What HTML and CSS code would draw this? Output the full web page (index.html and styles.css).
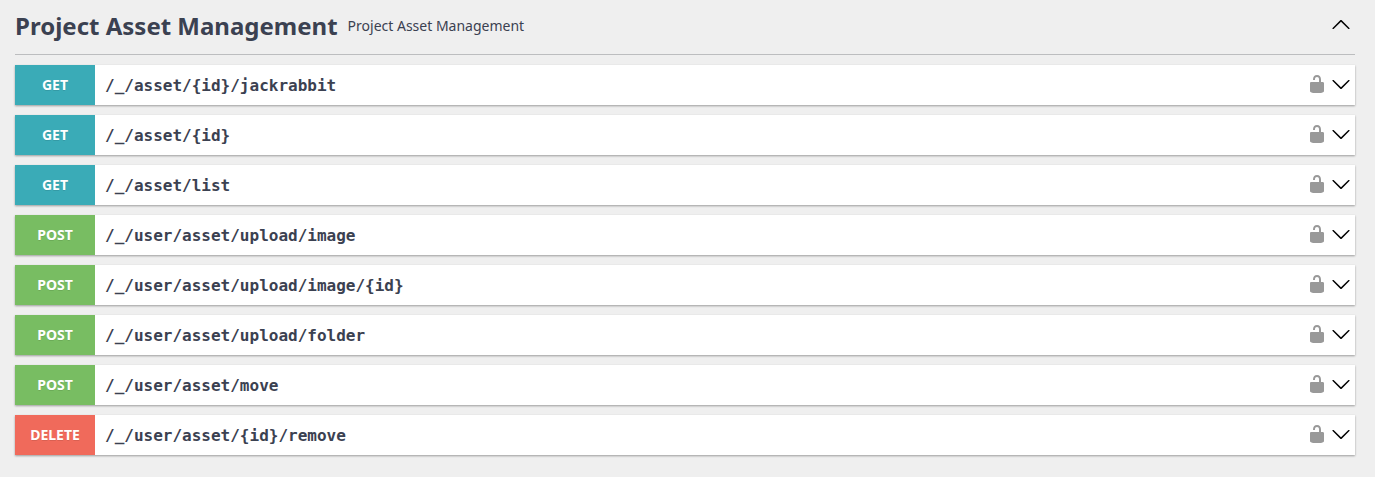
FILE: index.html
```html
<!DOCTYPE html>
<html lang="en">
<head>
<meta charset="utf-8">
<title>Project Asset Management</title>
<link rel="stylesheet" href="styles.css">
</head>
<body>
<svg class="sprite" aria-hidden="true">
  <symbol id="lock" viewBox="0 0 20 20"><path d="M15.8 8H14V5.6C14 2.703 12.665 1 10 1 7.334 1 6 2.703 6 5.6V6h2v-.801C8 3.754 8.797 3 10 3c1.203 0 2 .754 2 2.199V8H4c-.553 0-1 .646-1 1.199V17c0 .549.428 1.139.951 1.307l1.197.387C5.672 18.861 6.55 19 7.1 19h5.8c.549 0 1.428-.139 1.951-.307l1.196-.387c.524-.167.953-.757.953-1.306V9.199C17 8.646 16.352 8 15.8 8z"/></symbol>
  <symbol id="arrow" viewBox="0 0 20 20"><path d="M17.418 6.109c.272-.268.709-.268.979 0s.271.701 0 .969l-7.908 7.83c-.27.268-.707.268-.979 0l-7.908-7.83c-.27-.268-.27-.701 0-.969.271-.268.709-.268.979 0L10 13.25l7.418-7.141z"/></symbol>
</svg>
<section class="tag-section">
  <header class="tag-header">
    <h3 class="tag-title">Project Asset Management</h3>
    <small class="tag-desc">Project Asset Management</small>
    <svg class="arrow up" width="20" height="20"><use href="#arrow"/></svg>
  </header>
  <div class="ops">
    <div class="op"><span class="method get">GET</span><span class="path">/_/asset/{id}/jackrabbit</span><svg class="lock" width="20" height="20"><use href="#lock"/></svg><svg class="arrow" width="20" height="20"><use href="#arrow"/></svg></div>
    <div class="op"><span class="method get">GET</span><span class="path">/_/asset/{id}</span><svg class="lock" width="20" height="20"><use href="#lock"/></svg><svg class="arrow" width="20" height="20"><use href="#arrow"/></svg></div>
    <div class="op"><span class="method get">GET</span><span class="path">/_/asset/list</span><svg class="lock" width="20" height="20"><use href="#lock"/></svg><svg class="arrow" width="20" height="20"><use href="#arrow"/></svg></div>
    <div class="op"><span class="method post">POST</span><span class="path">/_/user/asset/upload/image</span><svg class="lock" width="20" height="20"><use href="#lock"/></svg><svg class="arrow" width="20" height="20"><use href="#arrow"/></svg></div>
    <div class="op"><span class="method post">POST</span><span class="path">/_/user/asset/upload/image/{id}</span><svg class="lock" width="20" height="20"><use href="#lock"/></svg><svg class="arrow" width="20" height="20"><use href="#arrow"/></svg></div>
    <div class="op"><span class="method post">POST</span><span class="path">/_/user/asset/upload/folder</span><svg class="lock" width="20" height="20"><use href="#lock"/></svg><svg class="arrow" width="20" height="20"><use href="#arrow"/></svg></div>
    <div class="op"><span class="method post">POST</span><span class="path">/_/user/asset/move</span><svg class="lock" width="20" height="20"><use href="#lock"/></svg><svg class="arrow" width="20" height="20"><use href="#arrow"/></svg></div>
    <div class="op"><span class="method delete">DELETE</span><span class="path">/_/user/asset/{id}/remove</span><svg class="lock" width="20" height="20"><use href="#lock"/></svg><svg class="arrow" width="20" height="20"><use href="#arrow"/></svg></div>
  </div>
</section>
</body>
</html>
```

FILE: styles.css
```css
* { box-sizing: border-box; }
html, body { height: 100%; }
body {
  margin: 0;
  background: #efefef;
  color: #3b4151;
  font-family: "Noto Sans", sans-serif;
  overflow: hidden;
}
.sprite { display: none; }
.tag-section { padding: 0 20px 0 15px; }
.tag-header {
  display: flex;
  align-items: center;
  height: 55px;
  border-bottom: 1px solid #bcbdbf;
  padding-bottom: 2px;
}
.tag-title { margin: 0; font-size: 24px; font-weight: 700; line-height: 52px; }
.tag-desc { margin-left: 10px; font-size: 14px; line-height: 20px; flex: 1; }
.arrow { flex: none; fill: #000; margin-bottom: 2px; }
.tag-header .arrow { margin-right: 4px; }
.up { transform: scaleY(-1); }
.ops { display: flex; flex-direction: column; gap: 10px; margin-top: 10px; }
.op {
  display: flex;
  align-items: center;
  height: 40px;
  background: #fff;
  box-shadow: 0 1px 2px rgba(0, 0, 0, .35);
  padding-right: 4px;
}
.method {
  flex: none;
  width: 80px;
  height: 40px;
  line-height: 40px;
  text-align: center;
  color: #fff;
  font-size: 14px;
  font-weight: 700;
  text-shadow: 0 1px 0 rgba(0, 0, 0, .1);
}
.get { background: #3aabb7; }
.post { background: #78bd62; }
.delete { background: #f06a5b; }
.path {
  flex: 1;
  padding-left: 10px;
  font-family: "DejaVu Sans Mono", monospace;
  font-size: 16px;
  font-weight: 700;
}
.lock { flex: none; fill: #999; margin-right: 4px; margin-bottom: 2px; }
```
